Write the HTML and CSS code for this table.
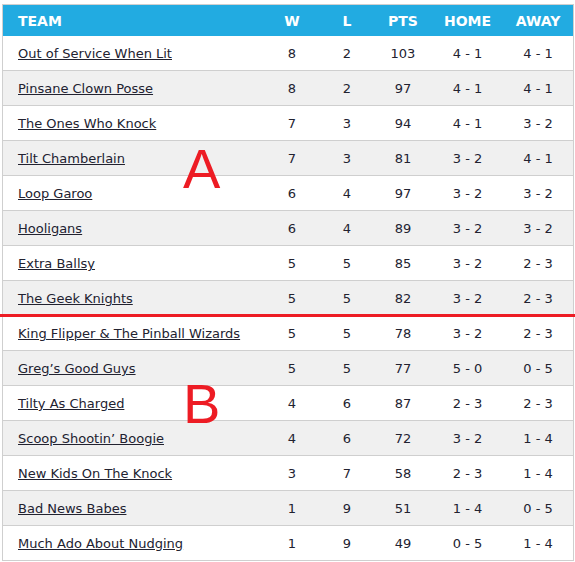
FILE: index.html
```html
<!DOCTYPE html>
<html>
<head>
<meta charset="utf-8">
<link rel="stylesheet" href="styles.css">
</head>
<body>
<div class="page">
  <div class="standings">
    <div class="row head">
      <div class="team">TEAM</div><div>W</div><div>L</div><div>PTS</div><div>HOME</div><div>AWAY</div>
    </div>
    <div class="row"><div class="team"><a href="#">Out of Service When Lit</a></div><div>8</div><div>2</div><div>103</div><div>4 - 1</div><div>4 - 1</div></div>
    <div class="row"><div class="team"><a href="#">Pinsane Clown Posse</a></div><div>8</div><div>2</div><div>97</div><div>4 - 1</div><div>4 - 1</div></div>
    <div class="row"><div class="team"><a href="#">The Ones Who Knock</a></div><div>7</div><div>3</div><div>94</div><div>4 - 1</div><div>3 - 2</div></div>
    <div class="row"><div class="team"><a href="#">Tilt Chamberlain</a></div><div>7</div><div>3</div><div>81</div><div>3 - 2</div><div>4 - 1</div></div>
    <div class="row"><div class="team"><a href="#">Loop Garoo</a></div><div>6</div><div>4</div><div>97</div><div>3 - 2</div><div>3 - 2</div></div>
    <div class="row"><div class="team"><a href="#">Hooligans</a></div><div>6</div><div>4</div><div>89</div><div>3 - 2</div><div>3 - 2</div></div>
    <div class="row"><div class="team"><a href="#">Extra Ballsy</a></div><div>5</div><div>5</div><div>85</div><div>3 - 2</div><div>2 - 3</div></div>
    <div class="row"><div class="team"><a href="#">The Geek Knights</a></div><div>5</div><div>5</div><div>82</div><div>3 - 2</div><div>2 - 3</div></div>
    <div class="row"><div class="team"><a href="#">King Flipper &amp; The Pinball Wizards</a></div><div>5</div><div>5</div><div>78</div><div>3 - 2</div><div>2 - 3</div></div>
    <div class="row"><div class="team"><a href="#">Greg’s Good Guys</a></div><div>5</div><div>5</div><div>77</div><div>5 - 0</div><div>0 - 5</div></div>
    <div class="row"><div class="team"><a href="#">Tilty As Charged</a></div><div>4</div><div>6</div><div>87</div><div>2 - 3</div><div>2 - 3</div></div>
    <div class="row"><div class="team"><a href="#">Scoop Shootin’ Boogie</a></div><div>4</div><div>6</div><div>72</div><div>3 - 2</div><div>1 - 4</div></div>
    <div class="row"><div class="team"><a href="#">New Kids On The Knock</a></div><div>3</div><div>7</div><div>58</div><div>2 - 3</div><div>1 - 4</div></div>
    <div class="row"><div class="team"><a href="#">Bad News Babes</a></div><div>1</div><div>9</div><div>51</div><div>1 - 4</div><div>0 - 5</div></div>
    <div class="row"><div class="team"><a href="#">Much Ado About Nudging</a></div><div>1</div><div>9</div><div>49</div><div>0 - 5</div><div>1 - 4</div></div>
  </div>
  <div class="cutline"></div>
  <div class="mark mark-a">A</div>
  <div class="mark mark-b">B</div>
</div>
</body>
</html>
```
FILE: styles.css
```css
html, body {
  margin: 0;
  padding: 0;
  background: #ffffff;
}
.page {
  position: relative;
  width: 575px;
  height: 562px;
  overflow: hidden;
}
.standings {
  margin: 4px 0 0 2px;
  width: 572px;
  box-sizing: border-box;
  border: 1px solid #cfcfcf;
  border-bottom: none;
  font-family: "DejaVu Sans", sans-serif;
  font-size: 13px;
  color: #222230;
}
.row {
  display: grid;
  grid-template-columns: 1fr 56px 54px 58px 71px 70px;
  align-items: center;
  height: 35px;
  box-sizing: border-box;
  padding-top: 1px;
  border-bottom: 1px solid #cfcfcf;
  text-align: center;
}
.row:nth-child(odd) {
  background: #f0f0f0;
}
.row .team {
  text-align: left;
  padding-left: 15px;
}
.row a {
  color: #222230;
  text-decoration: underline;
}
.row.head {
  height: 31px;
  padding-top: 0;
  background: #22abe1;
  color: #ffffff;
  font-weight: bold;
  font-size: 14px;
  border-bottom: none;
}
.cutline {
  position: absolute;
  left: 0;
  top: 314px;
  width: 575px;
  height: 3px;
  background: #ed1c24;
}
.mark {
  position: absolute;
  font-family: "Liberation Sans", sans-serif;
  font-size: 56px;
  line-height: 56px;
  color: #ed1c24;
}
.mark-a {
  left: 183px;
  top: 141px;
}
.mark-b {
  left: 183px;
  top: 376px;
}
```
